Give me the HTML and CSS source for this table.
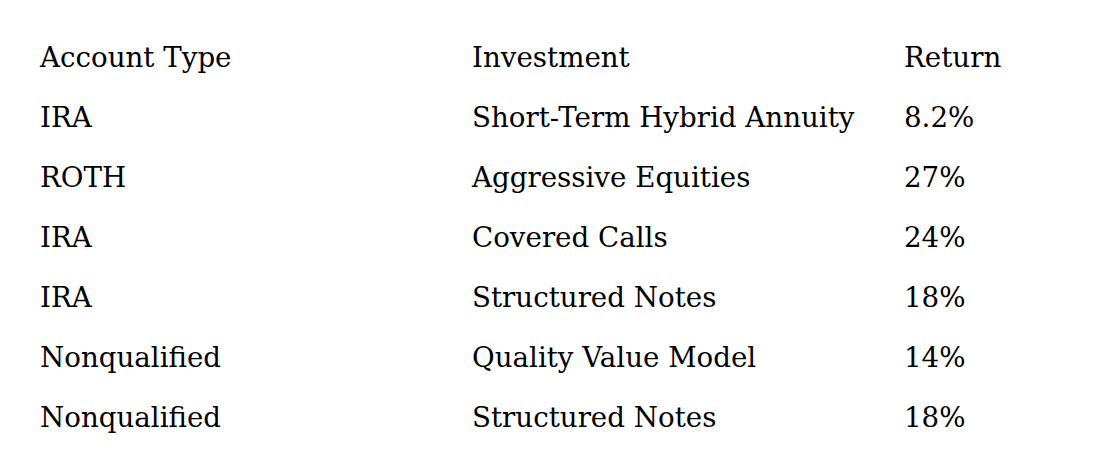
FILE: index.html
```html
<!DOCTYPE html>
<html>
<head>
<meta charset="utf-8">
<link rel="stylesheet" href="styles.css">
</head>
<body>
<table class="accounts">
  <colgroup>
    <col class="col-wide">
    <col class="col-wide">
    <col class="col-narrow">
  </colgroup>
  <thead>
    <tr><th>Account Type</th><th>Investment</th><th>Return</th></tr>
  </thead>
  <tbody>
    <tr><td>IRA</td><td>Short-Term Hybrid Annuity</td><td>8.2%</td></tr>
    <tr><td>ROTH</td><td>Aggressive Equities</td><td>27%</td></tr>
    <tr><td>IRA</td><td>Covered Calls</td><td>24%</td></tr>
    <tr><td>IRA</td><td>Structured Notes</td><td>18%</td></tr>
    <tr><td>Nonqualified</td><td>Quality Value Model</td><td>14%</td></tr>
    <tr><td>Nonqualified</td><td>Structured Notes</td><td>18%</td></tr>
  </tbody>
</table>
</body>
</html>
```

FILE: styles.css
```css
html, body {
  margin: 0;
  background: #ffffff;
}
body {
  padding: 28px 0 0 40px;
}
.accounts {
  border-collapse: collapse;
  table-layout: fixed;
  width: 1064px;
  font-family: "DejaVu Serif", serif;
  font-size: 27.7px;
  color: #000;
}
.col-wide {
  width: 432px;
}
.col-narrow {
  width: 200px;
}
.accounts th,
.accounts td {
  padding: 0;
  height: 60px;
  line-height: 60px;
  text-align: left;
  font-weight: normal;
  white-space: nowrap;
}
```
